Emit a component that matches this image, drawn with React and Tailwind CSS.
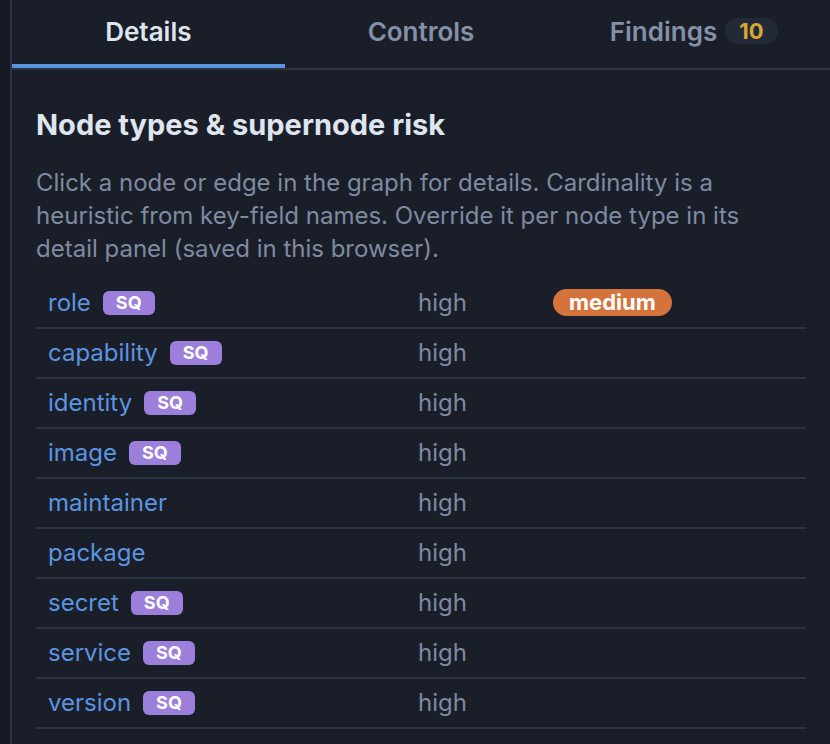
import { useState } from 'react'

const rows = [
  { name: 'role', sq: true, card: 'high', risk: 'medium' },
  { name: 'capability', sq: true, card: 'high' },
  { name: 'identity', sq: true, card: 'high' },
  { name: 'image', sq: true, card: 'high' },
  { name: 'maintainer', sq: false, card: 'high' },
  { name: 'package', sq: false, card: 'high' },
  { name: 'secret', sq: true, card: 'high' },
  { name: 'service', sq: true, card: 'high' },
  { name: 'version', sq: true, card: 'high' },
]

const tabs = [
  { id: 'details', label: 'Details' },
  { id: 'controls', label: 'Controls' },
  { id: 'findings', label: 'Findings', count: 10 },
]

export default function App() {
  const [tab, setTab] = useState('details')

  return (
    <div className="flex h-[744px] w-[830px] overflow-hidden bg-[#151922] font-['Inter',sans-serif]">
      <div className="w-[10px] shrink-0" />
      <div className="flex-1 border-l-2 border-[#2c3344] bg-[#1a1e29]">
        <div className="flex border-b-2 border-[#2c3344]">
          {tabs.map((t) => (
            <button
              key={t.id}
              onClick={() => setTab(t.id)}
              className={`flex h-[68px] flex-1 items-center justify-center gap-2 border-b-4 pb-[2px] text-[26px] font-semibold ${
                tab === t.id ? 'border-[#5b93e0] text-[#dfe5ef]' : 'border-transparent text-[#8391a8]'
              }`}
            >
              {t.label}
              {t.count && (
                <span className="rounded-full bg-[#222a38] px-[14px] text-[22px] font-bold leading-[26px] text-[#d6a830]">
                  {t.count}
                </span>
              )}
            </button>
          ))}
        </div>

        <div className="px-6 pt-[38px]">
          <h2 className="text-[29px] font-bold leading-[34px] text-[#dfe5ef]">Node types &amp; supernode risk</h2>
          <p className="mt-[24px] text-[24px] leading-[33px] text-[#7f8aa0]">
            Click a node or edge in the graph for details. Cardinality is a<br />
            heuristic from key-field names. Override it per node type in its<br />
            detail panel (saved in this browser).
          </p>

          <table className="mt-[13px] w-full border-collapse text-[24px]">
            <tbody>
              {rows.map((r) => (
                <tr key={r.name} className="h-[50px] border-b-2 border-[#2c3344]">
                  <td className="w-[370px] px-3">
                    <span className="flex items-center gap-3">
                      <span className="text-[#5b95e0]">{r.name}</span>
                      {r.sq && (
                        <span className="rounded-[6px] bg-[#9c7fdb] px-[13px] text-[18px] font-bold leading-[24px] text-white">
                          SQ
                        </span>
                      )}
                    </span>
                  </td>
                  <td className="w-[135px] px-3 text-[#7f8aa0]">{r.card}</td>
                  <td className="px-3">
                    {r.risk && (
                      <span className="-mt-[3px] inline-block rounded-full bg-[#d4733c] px-[16px] align-middle text-[22px] font-bold leading-[27px] text-white">
                        {r.risk}
                      </span>
                    )}
                  </td>
                </tr>
              ))}
            </tbody>
          </table>
        </div>
      </div>
    </div>
  )
}
